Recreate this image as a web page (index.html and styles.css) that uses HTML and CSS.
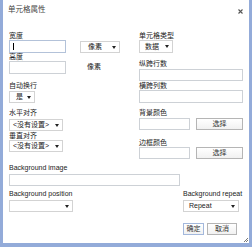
FILE: index.html
```html
<!DOCTYPE html>
<html lang="zh">
<head>
  <meta charset="UTF-8" />
  <title>单元格属性</title>
  <link rel="stylesheet" href="styles.css">
</head>
<body>

<div class="dialog">
  <div class="titlebar">
    <span class="title">单元格属性</span>
    <svg class="close" width="5" height="5" viewBox="0 0 5 5">
      <path d="M0.5 0.5 L4.5 4.5 M4.5 0.5 L0.5 4.5" stroke="#555" stroke-width="1.1" fill="none"/>
    </svg>
  </div>

  <div class="body">
    <div class="cols">
      <!-- left column -->
      <div class="col">
        <span class="lbl">宽度</span>
        <div class="row">
          <div class="input size-input focused"><span class="caret"></span></div>
          <div class="select unit-select"><span class="val">像素</span><span class="arrow"></span></div>
        </div>
        <span class="lbl">高度</span>
        <div class="row">
          <div class="input size-input"></div>
          <span class="unit">像素</span>
        </div>
        <span class="lbl gap8">自动换行</span>
        <div class="select wrap-select"><span class="val">是</span><span class="arrow"></span></div>
        <span class="lbl gap6">水平对齐</span>
        <div class="select align-select halign"><span class="val">&lt;没有设置&gt;</span><span class="arrow"></span></div>
        <span class="lbl gap1">垂直对齐</span>
        <div class="select align-select"><span class="val">&lt;没有设置&gt;</span><span class="arrow"></span></div>
      </div>

      <!-- right column -->
      <div class="col">
        <span class="lbl">单元格类型</span>
        <div class="select type-select"><span class="val">数据</span><span class="arrow"></span></div>
        <span class="lbl gap7">纵跨行数</span>
        <div class="input span-input first-span"></div>
        <span class="lbl gap1">横跨列数</span>
        <div class="input span-input"></div>
        <span class="lbl gap6">背景颜色</span>
        <div class="row color-row gap1">
          <div class="input color-input"></div>
          <button class="btn pick-btn">选择</button>
        </div>
        <span class="lbl gap9">边框颜色</span>
        <div class="row color-row">
          <div class="input color-input"></div>
          <button class="btn pick-btn">选择</button>
        </div>
      </div>
    </div>

    <span class="lbl gap5">Background image</span>
    <div class="input image-input"></div>

    <div class="pair">
      <div class="field">
        <span class="lbl">Background position</span>
        <div class="select pos-select"><span class="val"></span><span class="arrow"></span></div>
      </div>
      <div class="field repeat-field">
        <span class="lbl">Background repeat</span>
        <div class="select repeat-select"><span class="val">Repeat</span><span class="arrow"></span></div>
      </div>
    </div>

    <div class="actions">
      <button class="btn ok-btn">确定</button>
      <button class="btn cancel-btn">取消</button>
    </div>
  </div>

  <svg class="grip" width="6" height="6" viewBox="0 0 6 6">
    <path d="M5 1 L1 5 M5 3 L3 5" stroke="#777" stroke-width="1" fill="none"/>
  </svg>
</div>

</body>
</html>
```

FILE: styles.css
```css
body {
  margin: 0;
  font-family: "Liberation Sans", "Noto Sans CJK SC", sans-serif;
  font-size: 7px;
  color: #222;
  background: #fff;
}
.dialog {
  position: relative;
  width: 252px;
  height: 247px;
  box-sizing: border-box;
  border: 3px solid #93abd9;
  border-top: 0;
  border-bottom-width: 4px;
  background: #fff;
}
.titlebar {
  display: flex;
  justify-content: space-between;
  height: 32px;
  box-sizing: border-box;
  padding: 5px 6px 0 5px;
}
.title {
  font-size: 7.5px;
  line-height: 10px;
  color: #444;
}
.close {
  margin-top: 4px;
}
.body {
  padding: 0 6px;
}
.cols {
  display: grid;
  grid-template-columns: 130px 1fr;
}
.col {
  display: flex;
  flex-direction: column;
  align-items: flex-start;
}
.row {
  display: flex;
  align-items: flex-start;
}
.lbl {
  display: block;
  height: 8px;
  line-height: 8px;
  white-space: nowrap;
}
.gap1 { margin-top: 1px; }
.gap5 { margin-top: 5px; }
.gap6 { margin-top: 6px; }
.gap7 { margin-top: 7px; }
.gap8 { margin-top: 8px; }
.gap9 { margin-top: 9px; }

.input {
  height: 13px;
  box-sizing: border-box;
  border: 1px solid #cdd1d6;
  background: #fff;
}
.input.focused {
  border-color: #b3c2d9;
}
.caret {
  display: block;
  width: 1px;
  height: 7px;
  margin: 2px 0 0 3px;
  background: #000;
}
.select {
  display: flex;
  align-items: center;
  height: 12px;
  box-sizing: border-box;
  border: 1px solid #d3d3d3;
  background: #fff;
  padding: 0 3px 0 5px;
  line-height: 10px;
  white-space: nowrap;
}
.select .val {
  flex: 1;
}
.arrow {
  width: 0;
  height: 0;
  border-left: 2px solid transparent;
  border-right: 2px solid transparent;
  border-top: 3px solid #222;
}

.size-input { width: 57px; }
.unit-select {
  width: 40px;
  height: 12px;
  margin: 1px 0 0 14px;
  padding-left: 7px;
}
.unit {
  margin: -1px 0 0 21px;
  line-height: 13px;
}
.wrap-select {
  width: 26px;
  margin-top: 1px;
  padding-left: 6px;
}
.align-select {
  width: 54px;
  padding-left: 3px;
}
.halign { margin-top: 2px; }

.type-select {
  width: 34px;
  height: 13px;
}
.span-input { width: 104px; }
.first-span {
  height: 12px;
  margin-top: 1px;
}
.color-row { height: 12px; }
.color-input {
  width: 51px;
  height: 12px;
}

.btn {
  box-sizing: border-box;
  height: 12px;
  padding: 0;
  font-family: inherit;
  font-size: 7px;
  line-height: 10px;
  color: #333;
  border: 1px solid #b5b5b5;
  background: linear-gradient(#fff, #f1f1f1);
}
.pick-btn {
  width: 47px;
  margin-left: 6px;
}

.image-input {
  width: 171px;
  height: 12px;
  margin-top: 2px;
}
.pair {
  display: flex;
  justify-content: space-between;
  margin-top: 4px;
}
.field .select {
  margin-top: 2px;
}
.pos-select { width: 64px; }
.repeat-field { width: 60px; }
.repeat-select { width: 56px; }

.actions {
  display: flex;
  justify-content: flex-end;
  gap: 3px;
  margin-top: 11px;
  padding-right: 6px;
}
.ok-btn {
  width: 21px;
  border-color: #a3b8dc;
}
.cancel-btn {
  width: 30px;
}
.grip {
  position: absolute;
  right: 0;
  bottom: 0;
}
```
